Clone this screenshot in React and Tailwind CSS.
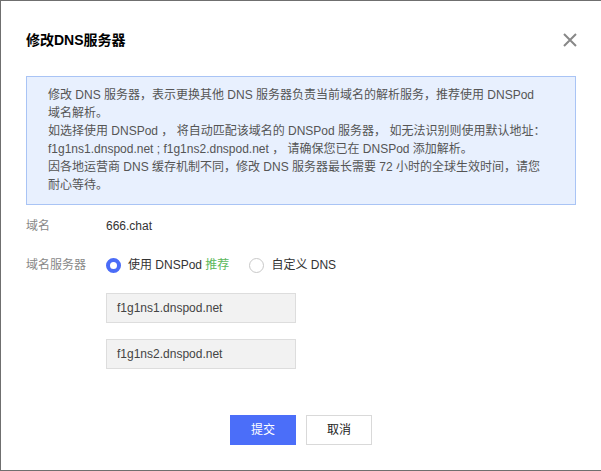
import React, { useState } from 'react';

const font = "font-['Liberation_Sans','Noto_Sans_CJK_SC',sans-serif]";

const Radio = ({ checked, onClick, children }) => (
  <label onClick={onClick} className="flex items-center gap-[7px] cursor-pointer">
    {checked ? (
      <span className="w-[15px] h-[15px] rounded-full border-[4px] border-[#4a6cf7] bg-white" />
    ) : (
      <span className="w-[15px] h-[15px] rounded-full border border-[#c8c8c8] bg-white" />
    )}
    <span className="text-[#333]">{children}</span>
  </label>
);

const App = () => {
  const [mode, setMode] = useState('dnspod');

  return (
    <div className={`${font} w-[601px] h-[471px] bg-white border-t border-l border-b border-[#6f6f6f] pl-[25px] pr-[25px] pt-[29px] text-[12px] leading-[18px] overflow-hidden`}>
      <div className="flex items-center justify-between h-[20px]">
        <h2 className="text-[14px] font-bold text-black leading-[20px]">修改DNS服务器</h2>
        <svg width="14" height="14" viewBox="0 0 14 14" className="mr-[-1px]">
          <path d="M1 1 L13 13 M13 1 L1 13" stroke="#888" strokeWidth="2" />
        </svg>
      </div>

      <div className="mt-[26px] border border-[#a9c4f5] bg-[#e8f0fe] pl-[21px] pr-[10px] pt-[9px] pb-[10px] text-[#555]">
        <p>
          修改 DNS 服务器，表示更换其他 DNS 服务器负责当前域名的解析服务，推荐使用 DNSPod
          <br />
          域名解析。
        </p>
        <p>
          如选择使用 DNSPod ， 将自动匹配该域名的 DNSPod 服务器， 如无法识别则使用默认地址：
          <br />
          f1g1ns1.dnspod.net ; f1g1ns2.dnspod.net ， 请确保您已在 DNSPod 添加解析。
        </p>
        <p>
          因各地运营商 DNS 缓存机制不同，修改 DNS 服务器最长需要 72 小时的全球生效时间，请您
          <br />
          耐心等待。
        </p>
      </div>

      <div className="mt-[12px] flex">
        <div className="w-[80px] text-[#888]">域名</div>
        <div className="text-[#333]">666.chat</div>
      </div>

      <div className="mt-[20px] flex">
        <div className="w-[80px] text-[#888] leading-[20px]">域名服务器</div>
        <div className="flex flex-col">
          <div className="flex items-center gap-[20px] h-[20px]">
            <Radio checked={mode === 'dnspod'} onClick={() => setMode('dnspod')}>
              使用 DNSPod <span className="text-[#5cb85c]">推荐</span>
            </Radio>
            <Radio checked={mode === 'custom'} onClick={() => setMode('custom')}>
              自定义 DNS
            </Radio>
          </div>
          <div className="mt-[18px] w-[190px] h-[30px] border border-[#ddd] bg-[#f2f2f2] pl-[10px] flex items-center text-[#444]">
            f1g1ns1.dnspod.net
          </div>
          <div className="mt-[16px] w-[190px] h-[30px] border border-[#ddd] bg-[#f2f2f2] pl-[10px] flex items-center text-[#444]">
            f1g1ns2.dnspod.net
          </div>
        </div>
      </div>

      <div className="mt-[46px] flex justify-center gap-[10px]">
        <button className="w-[66px] h-[30px] bg-[#4b6ef9] text-white">提交</button>
        <button className="w-[66px] h-[30px] border border-[#d9d9d9] bg-white text-[#222]">取消</button>
      </div>
    </div>
  );
};

export default App;
